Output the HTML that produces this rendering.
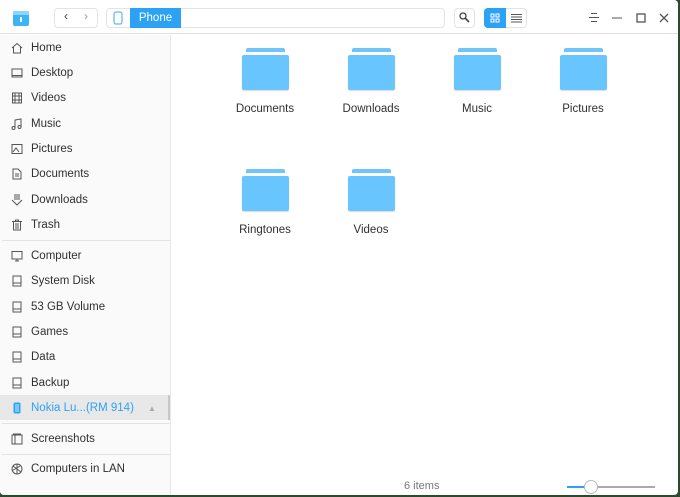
<!DOCTYPE html>
<html><head><style>
*{margin:0;padding:0;box-sizing:border-box}
body{width:680px;height:497px;background:#2b4a2b;font-family:"Liberation Sans",sans-serif;position:relative;overflow:hidden}
#win{position:absolute;left:0;top:0;width:678px;height:495px;background:#fff;border-radius:0 4px 4px 4px;overflow:hidden}
#tb{position:absolute;left:0;top:0;width:678px;height:34px;background:#fff;border-bottom:1px solid #e2e2e2}
#side{position:absolute;left:0;top:35px;width:171px;height:460px;background:#fafafa;border-right:1px solid #e6e6e6}
.it{position:absolute;left:0;width:170px;height:25px;font-size:11.5px;color:#303030;line-height:27px;padding-left:31px}
.ic{position:absolute;left:11px;top:7px;width:12px;height:12px}
.sep{position:absolute;left:2px;width:168px;height:1px;background:#e3e3e3}
.f{position:absolute;width:100px;text-align:center;font-size:11.5px;color:#303030}
.fo{position:relative;margin:0 auto;width:47px;height:42px}
.fo .t{position:absolute;left:4px;top:0;width:39px;height:4px;background:#6fc4fb;border-radius:2px 2px 0 0}
.fo .b{position:absolute;left:0;top:7px;width:47px;height:35px;background:#69c5fd;border-radius:2px;box-shadow:0 1px 1px rgba(0,0,0,.15)}
.btn{position:absolute;border:1px solid #e3e3e3;border-radius:4px;background:#fff}
</style></head><body>
<div style="position:absolute;left:187px;top:0;width:85px;height:2px;background:#2aa0f5"></div>
<div id="win">
<div id="tb">
 <svg style="position:absolute;left:13px;top:9px" width="16" height="17"><rect x="0" y="2" width="16" height="15" rx="2" fill="#3cb4f5"/><rect x="0" y="2" width="16" height="4" fill="#8ad6ff"/><rect x="7" y="8" width="2" height="5" fill="#fff"/></svg>
 <div class="btn" style="left:54px;top:8px;width:44px;height:20px"></div>
 <div style="position:absolute;left:64px;top:9px;font-size:12px;color:#444">&#8249;</div>
 <div style="position:absolute;left:84px;top:9px;font-size:12px;color:#999">&#8250;</div>
 <div class="btn" style="left:106px;top:8px;width:339px;height:20px"></div>
 <svg style="position:absolute;left:113px;top:11px" width="10" height="14"><rect x="1" y="1" width="8" height="12" rx="2" fill="none" stroke="#60b5f0" stroke-width="1.2"/></svg>
 <div style="position:absolute;left:130px;top:8px;width:51px;height:20px;background:#2ca2f5;color:#fff;font-size:11.5px;line-height:21px;text-align:center">Phone</div>
 <div class="btn" style="left:454px;top:8px;width:21px;height:20px"></div>
 <svg style="position:absolute;left:459px;top:12px" width="11" height="11"><circle cx="4" cy="4" r="3" fill="none" stroke="#444" stroke-width="1.3"/><path d="M6 6 L10 10" stroke="#444" stroke-width="1.6"/></svg>
 <div class="btn" style="left:484px;top:8px;width:43px;height:20px"></div>
 <div style="position:absolute;left:484px;top:8px;width:22px;height:20px;background:#2ca2f5;border-radius:4px 0 0 4px"></div>
 <svg style="position:absolute;left:490px;top:13px" width="10" height="10" fill="none" stroke="#fff"><rect x="1" y="1" width="3" height="3"/><rect x="6" y="1" width="3" height="3"/><rect x="1" y="6" width="3" height="3"/><rect x="6" y="6" width="3" height="3"/></svg>
 <svg style="position:absolute;left:511px;top:13px" width="11" height="10" stroke="#555"><path d="M0 1.5H11M0 4H11M0 6.5H11M0 9H11"/></svg>
 <svg style="position:absolute;left:589px;top:12px" width="10" height="11" stroke="#555"><path d="M2 1.5H8M0 5.5H10M2 9.5H8"/></svg>
 <svg style="position:absolute;left:612px;top:17px" width="10" height="2" stroke="#555"><path d="M0 1H10"/></svg>
 <svg style="position:absolute;left:636px;top:13px" width="10" height="10" fill="none" stroke="#555" stroke-width="1.3"><rect x="1" y="1" width="8" height="8"/></svg>
 <svg style="position:absolute;left:659px;top:13px" width="10" height="10" stroke="#555" stroke-width="1.3"><path d="M1 1L9 9M9 1L1 9"/></svg>
</div>
<div id="side">
 <div class="it" style="top:0">Home<svg class="ic" viewBox="0 0 12 12" fill="none" stroke="#555"><path d="M1 6L6 1.5L11 6M2.5 5V11H9.5V5"/></svg></div>
 <div class="it" style="top:25px">Desktop<svg class="ic" viewBox="0 0 12 12" fill="none" stroke="#555"><rect x="1" y="2" width="10" height="8"/><path d="M1 8.5H11"/></svg></div>
 <div class="it" style="top:50px">Videos<svg class="ic" viewBox="0 0 12 12" fill="none" stroke="#555"><rect x="1.5" y="1" width="9" height="10"/><path d="M4 1V11M8 1V11M1.5 4H10.5M1.5 8H10.5"/></svg></div>
 <div class="it" style="top:76px">Music<svg class="ic" viewBox="0 0 12 12" fill="none" stroke="#555"><path d="M4 10V2L10 1V9"/><circle cx="2.5" cy="10" r="1.5"/><circle cx="8.5" cy="9" r="1.5"/></svg></div>
 <div class="it" style="top:101px">Pictures<svg class="ic" viewBox="0 0 12 12" fill="none" stroke="#555"><rect x="1" y="1.5" width="10" height="9"/><path d="M2 9L5 5L8 9"/></svg></div>
 <div class="it" style="top:126px">Documents<svg class="ic" viewBox="0 0 12 12" fill="none" stroke="#555"><path d="M2 1H7L10 4V11H2Z M4 6H8M4 8H8"/></svg></div>
 <div class="it" style="top:152px">Downloads<svg class="ic" viewBox="0 0 12 12" fill="none" stroke="#555"><path d="M3 1H9M3 3H9M3 5H9M1 6L6 11L11 6"/></svg></div>
 <div class="it" style="top:177px">Trash<svg class="ic" viewBox="0 0 12 12" fill="none" stroke="#555"><path d="M1 2.5H11M2.5 2.5V11H9.5V2.5M5 4V10M7 4V10M4.5 2.5V1H7.5V2.5"/></svg></div>
 <div class="sep" style="top:205px"></div>
 <div class="it" style="top:208px">Computer<svg class="ic" viewBox="0 0 12 12" fill="none" stroke="#555"><rect x="1" y="1.5" width="10" height="7.5"/><path d="M4 11H8M6 9V11"/></svg></div>
 <div class="it" style="top:233px">System Disk<svg class="ic" viewBox="0 0 12 12" fill="none" stroke="#555"><rect x="2" y="1" width="8" height="10"/><path d="M2 8H10"/></svg></div>
 <div class="it" style="top:259px">53 GB Volume<svg class="ic" viewBox="0 0 12 12" fill="none" stroke="#555"><rect x="2" y="1" width="8" height="10"/><path d="M2 8H10"/></svg></div>
 <div class="it" style="top:284px">Games<svg class="ic" viewBox="0 0 12 12" fill="none" stroke="#555"><rect x="2" y="1" width="8" height="10"/><path d="M2 8H10"/></svg></div>
 <div class="it" style="top:309px">Data<svg class="ic" viewBox="0 0 12 12" fill="none" stroke="#555"><rect x="2" y="1" width="8" height="10"/><path d="M2 8H10"/></svg></div>
 <div class="it" style="top:335px">Backup<svg class="ic" viewBox="0 0 12 12" fill="none" stroke="#555"><rect x="2" y="1" width="8" height="10"/><path d="M2 8H10"/></svg></div>
 <div class="it" style="top:360px;background:#e8e8e8;color:#2ca2f5;height:25px">Nokia Lu...(RM 914)<svg class="ic" viewBox="0 0 12 12"><rect x="2.5" y="0.5" width="7" height="11" rx="1.5" fill="#2ca2f5"/><rect x="4" y="2" width="4" height="8" fill="#7cc8f8"/></svg><span style="position:absolute;left:148px;top:0;color:#aaa;font-size:8px">&#9650;</span><span style="position:absolute;right:0;top:0;width:2px;height:25px;background:#c8c8c8"></span></div>
 <div class="sep" style="top:388px"></div>
 <div class="it" style="top:391px">Screenshots<svg class="ic" viewBox="0 0 12 12" fill="none" stroke="#555"><rect x="1" y="2" width="10" height="9"/><path d="M4 2V11M2 1H10"/></svg></div>
 <div class="sep" style="top:419px"></div>
 <div class="it" style="top:421px">Computers in LAN<svg class="ic" viewBox="0 0 12 12" fill="none" stroke="#555"><circle cx="6" cy="6" r="5"/><path d="M2 3L10 9M6 1V11M1.5 7.5L9 3"/></svg></div>
</div>
<div class="f" style="left:215px;top:48px"><div class="fo"><div class="t"></div><div class="b"></div></div><div style="margin-top:13px">Documents</div></div>
<div class="f" style="left:321px;top:48px"><div class="fo"><div class="t"></div><div class="b"></div></div><div style="margin-top:13px">Downloads</div></div>
<div class="f" style="left:427px;top:48px"><div class="fo"><div class="t"></div><div class="b"></div></div><div style="margin-top:13px">Music</div></div>
<div class="f" style="left:533px;top:48px"><div class="fo"><div class="t"></div><div class="b"></div></div><div style="margin-top:13px">Pictures</div></div>
<div class="f" style="left:215px;top:169px"><div class="fo"><div class="t"></div><div class="b"></div></div><div style="margin-top:13px">Ringtones</div></div>
<div class="f" style="left:321px;top:169px"><div class="fo"><div class="t"></div><div class="b"></div></div><div style="margin-top:13px">Videos</div></div>
<div style="position:absolute;left:404px;top:480px;font-size:11px;color:#777">6 items</div>
<div style="position:absolute;left:567px;top:486px;width:24px;height:2px;background:#2ca2f5"></div>
<div style="position:absolute;left:591px;top:486px;width:64px;height:2px;background:#aaa"></div>
<div style="position:absolute;left:584px;top:480px;width:14px;height:14px;border-radius:50%;background:#fff;border:1px solid #bbb"></div>
</div>
</body></html>
